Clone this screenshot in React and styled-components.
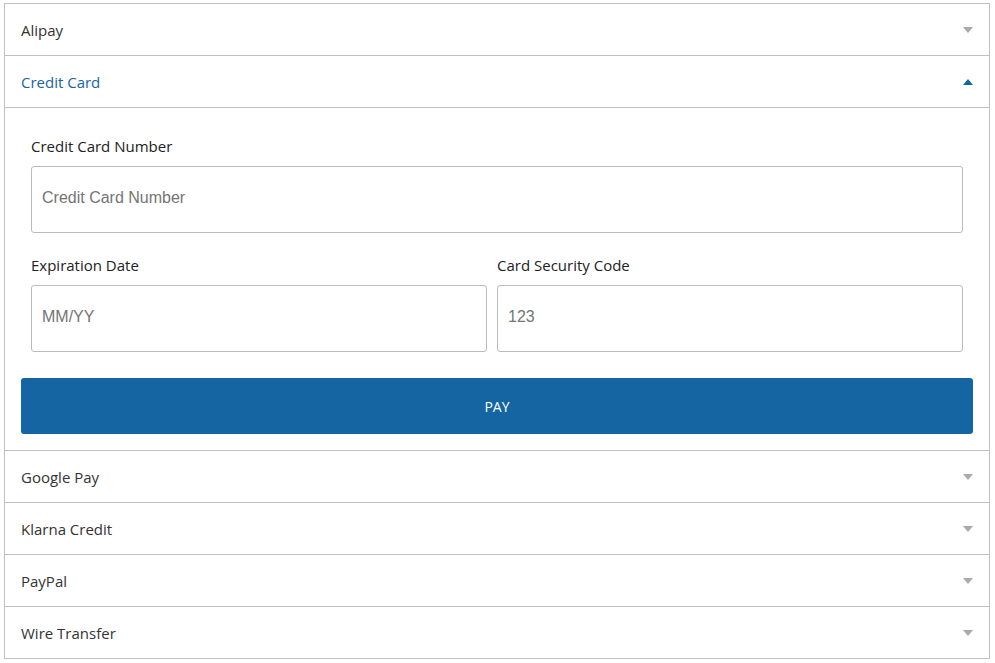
import React, { useState } from 'react';
import styled, { createGlobalStyle } from 'styled-components';

const GlobalStyle = createGlobalStyle`
  body {
    margin: 0;
    background: #fff;
    font-family: 'Open Sans', 'Noto Sans', sans-serif;
  }
`;

const Page = styled.div`
  padding: 3px 5px 0 4px;
`;

const Accordion = styled.div`
  border: 1px solid #c0c0c0;
  border-bottom: none;
`;

const Item = styled.div`
  border-bottom: 1px solid #c0c0c0;
`;

const Header = styled.button`
  display: flex;
  align-items: center;
  justify-content: space-between;
  width: 100%;
  height: 51px;
  padding: 0 16px 0 16px;
  border: none;
  background: #fff;
  font-family: 'Open Sans', 'Noto Sans', sans-serif;
  font-size: 15px;
  color: ${(p) => (p.$open ? '#1565a3' : '#333')};
  cursor: pointer;
  text-align: left;
`;

const Caret = styled.span`
  width: 0;
  height: 0;
  border-left: 5px solid transparent;
  border-right: 5px solid transparent;
  ${(p) =>
    p.$open
      ? 'border-bottom: 6px solid #1565a3;'
      : 'border-top: 6px solid #aaa;'}
`;

const Panel = styled.div`
  border-top: 1px solid #c0c0c0;
  padding: 27px 16px 16px 16px;
`;

const Fields = styled.div`
  display: grid;
  grid-template-columns: 456fr 466fr;
  column-gap: 10px;
  row-gap: 21px;
  padding: 0 10px;
`;

const Field = styled.label`
  display: flex;
  flex-direction: column;
  gap: 9px;
  grid-column: ${(p) => (p.$wide ? '1 / span 2' : 'auto')};
`;

const Label = styled.span`
  font-size: 15px;
  line-height: 22px;
  color: #222;
`;

const Input = styled.input`
  box-sizing: border-box;
  height: 67px;
  width: 100%;
  padding: 0 10px 3px;
  border: 1px solid #bbb;
  border-radius: 3px;
  font-family: 'Liberation Sans', Arial, sans-serif;
  font-size: 16px;
  color: #333;
  outline: none;

  &::placeholder {
    color: #757575;
  }
`;

const PayButton = styled.button`
  display: block;
  width: 100%;
  height: 56px;
  margin-top: 26px;
  border: none;
  border-radius: 3px;
  background: #1565a3;
  color: #fff;
  font-family: 'Open Sans', 'Noto Sans', sans-serif;
  font-size: 14px;
  cursor: pointer;
`;

const methods = ['Alipay', 'Credit Card', 'Google Pay', 'Klarna Credit', 'PayPal', 'Wire Transfer'];

export default function App() {
  const [open, setOpen] = useState('Credit Card');

  return (
    <Page>
      <GlobalStyle />
      <Accordion>
        {methods.map((m) => {
          const isOpen = open === m;
          return (
            <Item key={m}>
              <Header $open={isOpen} onClick={() => setOpen(isOpen ? null : m)}>
                {m}
                <Caret $open={isOpen} />
              </Header>
              {isOpen && m === 'Credit Card' && (
                <Panel>
                  <Fields>
                    <Field $wide>
                      <Label>Credit Card Number</Label>
                      <Input placeholder="Credit Card Number" />
                    </Field>
                    <Field>
                      <Label>Expiration Date</Label>
                      <Input placeholder="MM/YY" />
                    </Field>
                    <Field>
                      <Label>Card Security Code</Label>
                      <Input placeholder="123" />
                    </Field>
                  </Fields>
                  <PayButton>PAY</PayButton>
                </Panel>
              )}
            </Item>
          );
        })}
      </Accordion>
    </Page>
  );
}
